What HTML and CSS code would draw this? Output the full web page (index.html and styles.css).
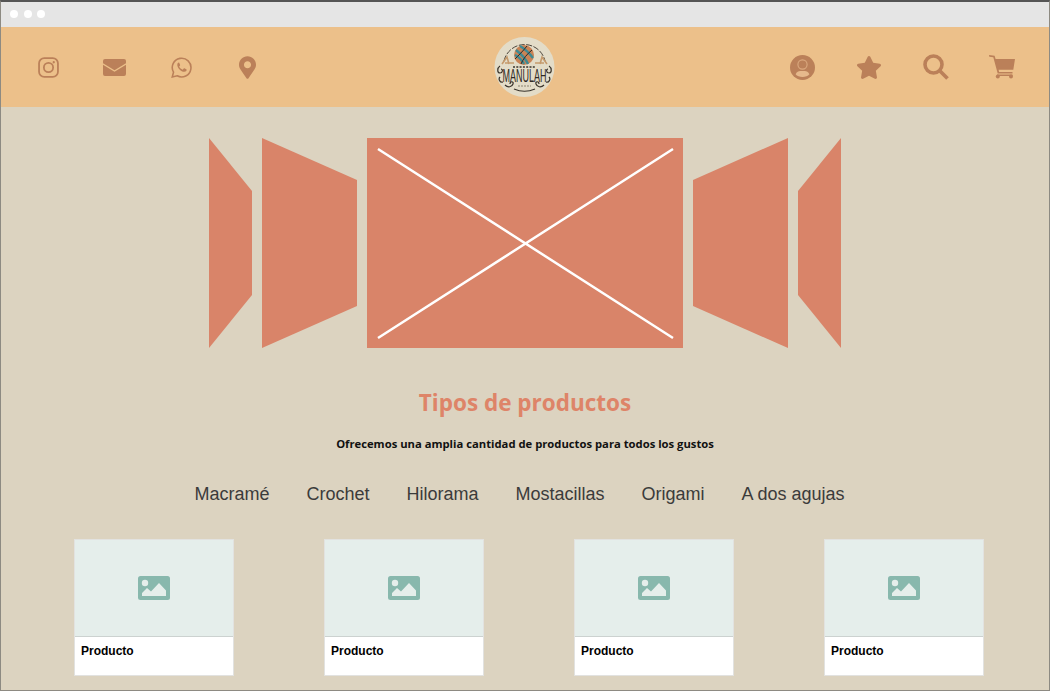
FILE: index.html
```html
<!DOCTYPE html>
<html>

<head>
    <meta charset="utf-8">
    <title>Manulah</title>
    <link rel="stylesheet" href="styles.css">
</head>

<body>
    <div class="chrome">
        <span class="dot"></span>
        <span class="dot"></span>
        <span class="dot"></span>
    </div>

    <header class="topbar">
        <nav class="icons icons-left">
            <a href="#" class="icon-cell">
                <svg class="ic" width="21" height="21" viewBox="0 0 20 20" fill="none" stroke="#bb8059" stroke-width="1.700">
                    <rect x="1" y="1" width="18" height="18" rx="5" />
                    <circle cx="10" cy="10" r="4.400" />
                    <circle cx="15" cy="5" r="1.100" fill="#bb8059" stroke="none" />
                </svg>
            </a>
            <a href="#" class="icon-cell">
                <svg class="ic" width="23" height="17" viewBox="0 0 23 17">
                    <path fill="#bb8059" d="M2 0h19a2 2 0 0 1 2 2v2.200l-11.500 7L0 4.200V2a2 2 0 0 1 2-2z" />
                    <path fill="#bb8059" d="M0 5.800l11.500 7L23 5.800V15a2 2 0 0 1-2 2H2a2 2 0 0 1-2-2z" />
                </svg>
            </a>
            <a href="#" class="icon-cell">
                <svg class="ic" width="21" height="21" viewBox="0 0 20 20">
                    <path fill="none" stroke="#bb8059" stroke-width="1.500" d="M1.200 19l1.200-4.500A8.900 8.900 0 1 1 5.900 17.900z" />
                    <path fill="#bb8059" d="M7.400 5.300c-.5 0-1.400.7-1.400 2.200 0 2.700 3.600 6.600 6.600 6.600 1.500 0 2.300-1 2.300-1.700 0-.5-.1-.7-.4-.8l-1.700-.8c-.3-.1-.5 0-.7.200l-.7.900c-.2.200-.4.200-.6.100-1.200-.5-2.300-1.500-2.900-2.700-.1-.2 0-.4.100-.5l.6-.8c.1-.2.100-.4 0-.6l-.7-1.600c-.2-.4-.3-.5-.6-.5z" />
                </svg>
            </a>
            <a href="#" class="icon-cell">
                <svg class="ic" width="17" height="23" viewBox="0 0 384 512">
                    <path fill="#bb8059" d="M172.268 501.67C26.97 291.031 0 262.429 0 192 0 85.961 85.961 0 192 0s192 85.961 192 192c0 70.429-26.97 99.031-172.268 309.67-9.535 13.774-29.93 13.773-39.464 0zM192 272c44.183 0 80-35.817 80-80s-35.817-80-80-80-80 35.817-80 80 35.817 80 80 80z" />
                </svg>
            </a>
        </nav>

        <div class="logo">
            <svg width="62" height="62" viewBox="0 0 62 62">
                <circle cx="30.500" cy="30" r="30" fill="#e3dcc8" />
                <path d="M10 24a21 21 0 0 1 41 0" fill="none" stroke="#3a342c" stroke-width=".9" stroke-dasharray="6 1.500" />
                <path d="M8 27l5-7 2 7M53 27l-5-7-2 7M11 26h9M41 26h9" fill="none" stroke="#c59a6c" stroke-width="1.600" />
                <circle cx="30" cy="18" r="10" fill="#c98355" />
                <path d="M22 13c5 4 10 9 12 14M21 18c4 2 7 5 9 9M26 9c5 3 10 8 13 12" fill="none" stroke="#3d8a93" stroke-width="2.400" />
                <path d="M33 9c-4 5-9 10-12 13M38 13c-5 4-9 9-11 14" fill="none" stroke="#2b2a28" stroke-width="1" />
                <path d="M19 30h23" stroke="#3a342c" stroke-width="1.600" stroke-dasharray="2 1.300" />
                <text class="logo-name" x="30.500" y="22.500" text-anchor="middle" textLength="44" lengthAdjust="spacingAndGlyphs" transform="scale(1 2)">MANULAH</text>
                <path d="M6 29c-3 2-3 7 0 7s3-4 1-4M55 29c3 2 3 7 0 7s-3-4-1-4M6 40c-2 2 0 6 3 5M55 40c2 2 0 6-3 5" fill="none" stroke="#3a342c" stroke-width="1.200" />
                <path d="M11 48c3 3 7 2 8-1s-3-3-3 0M50 48c-3 3-7 2-8-1s3-3 3 0M20 52c7 3 14 3 21 0" fill="none" stroke="#3a342c" stroke-width="1.200" />
                <path d="M24 49h13" stroke="#8c8371" stroke-width="1.200" stroke-dasharray="2 1" />
            </svg>
        </div>

        <nav class="icons icons-right">
            <a href="#" class="icon-cell">
                <svg class="ic" width="25" height="25" viewBox="0 0 25 25">
                    <circle cx="12.500" cy="12.500" r="12.500" fill="#bb8059" />
                    <circle cx="12.500" cy="9.500" r="4.600" fill="none" stroke="#dba97f" stroke-width="1.100" />
                    <path d="M5.600 19.300c1-2.200 3-3.300 4.600-3.300h4.600c1.600 0 3.600 1.100 4.600 3.300-1.500 1.700-4 2.700-6.900 2.700s-5.400-1-6.900-2.700z" fill="#e6b98c" />
                </svg>
            </a>
            <a href="#" class="icon-cell">
                <svg class="ic" width="26" height="23" viewBox="0 0 576 512">
                    <path fill="#bb8059" d="M259.300 17.800L194 150.200 47.900 171.500c-26.200 3.800-36.700 36.100-17.700 54.600l105.700 103-25 145.500c-4.500 26.300 23.200 46 46.400 33.700L288 439.600l130.700 68.700c23.200 12.200 50.900-7.400 46.400-33.700l-25-145.500 105.700-103c19-18.500 8.500-50.800-17.700-54.600L382 150.200 316.700 17.800c-11.700-23.600-45.600-23.900-57.400 0z" />
                </svg>
            </a>
            <a href="#" class="icon-cell">
                <svg class="ic" width="26" height="26" viewBox="0 0 26 26" fill="none" stroke="#bb8059">
                    <circle cx="10.500" cy="10.500" r="8.500" stroke-width="3.600" />
                    <path d="M16.500 16.500L24.500 24.500" stroke-width="3.800" />
                </svg>
            </a>
            <a href="#" class="icon-cell">
                <svg class="ic" width="26" height="24" viewBox="0 0 26 24">
                    <path fill="#bb8059" d="M0 0l5.600.8 1 3.200H26l-1.700 10.800H9.600l.5 2.200h13.400v1.500H8.700L4.300 2.200 .3 1.800z" />
                    <rect x="8" y="19.500" width="15.500" height="1.500" fill="#bb8059" />
                    <circle cx="8.800" cy="21.500" r="2" fill="#bb8059" />
                    <circle cx="22" cy="21.500" r="2" fill="#bb8059" />
                </svg>
            </a>
        </nav>
    </header>

    <main class="content">
        <section class="hero">
            <svg class="slide" width="43" height="210" viewBox="0 0 43 210">
                <polygon points="0,0 43,53 43,157 0,210" />
            </svg>
            <svg class="slide" width="95" height="210" viewBox="0 0 95 210">
                <polygon points="0,0 95,42 95,168 0,210" />
            </svg>
            <svg class="slide" width="316" height="210" viewBox="0 0 316 210">
                <rect width="316" height="210" />
                <path class="cross" d="M11 11L306 200M306 11L11 200" />
            </svg>
            <svg class="slide" width="95" height="210" viewBox="0 0 95 210">
                <polygon points="95,0 0,42 0,168 95,210" />
            </svg>
            <svg class="slide" width="43" height="210" viewBox="0 0 43 210">
                <polygon points="43,0 0,53 0,157 43,210" />
            </svg>
        </section>

        <h2 class="title">Tipos de productos</h2>
        <p class="subtitle">Ofrecemos una amplia cantidad de productos para todos los gustos</p>

        <ul class="cats">
            <li>Macramé</li>
            <li>Crochet</li>
            <li>Hilorama</li>
            <li>Mostacillas</li>
            <li>Origami</li>
            <li>A dos agujas</li>
        </ul>

        <div class="cards">
            <div class="card">
                <div class="thumb">
                    <svg width="32" height="24" viewBox="0 0 32 24">
                        <rect width="32" height="24" rx="2.500" fill="#88b8ad" />
                        <circle cx="7" cy="7" r="3.200" fill="#e5eeeb" />
                        <path d="M4 20v-3l5-5 4 3.500 8-8.500 7 7.500V20z" fill="#e5eeeb" />
                    </svg>
                </div>
                <div class="card-name">Producto</div>
            </div>
            <div class="card">
                <div class="thumb">
                    <svg width="32" height="24" viewBox="0 0 32 24">
                        <rect width="32" height="24" rx="2.500" fill="#88b8ad" />
                        <circle cx="7" cy="7" r="3.200" fill="#e5eeeb" />
                        <path d="M4 20v-3l5-5 4 3.500 8-8.500 7 7.500V20z" fill="#e5eeeb" />
                    </svg>
                </div>
                <div class="card-name">Producto</div>
            </div>
            <div class="card">
                <div class="thumb">
                    <svg width="32" height="24" viewBox="0 0 32 24">
                        <rect width="32" height="24" rx="2.500" fill="#88b8ad" />
                        <circle cx="7" cy="7" r="3.200" fill="#e5eeeb" />
                        <path d="M4 20v-3l5-5 4 3.500 8-8.500 7 7.500V20z" fill="#e5eeeb" />
                    </svg>
                </div>
                <div class="card-name">Producto</div>
            </div>
            <div class="card">
                <div class="thumb">
                    <svg width="32" height="24" viewBox="0 0 32 24">
                        <rect width="32" height="24" rx="2.500" fill="#88b8ad" />
                        <circle cx="7" cy="7" r="3.200" fill="#e5eeeb" />
                        <path d="M4 20v-3l5-5 4 3.500 8-8.500 7 7.500V20z" fill="#e5eeeb" />
                    </svg>
                </div>
                <div class="card-name">Producto</div>
            </div>
        </div>
    </main>
</body>

</html>
```

FILE: styles.css
```css
* {
    margin: 0;
    padding: 0;
    box-sizing: border-box;
}

html,
body {
    height: 691px;
    overflow: hidden;
}

body {
    background-color: #dcd3c0;
    border-top: 2px solid #555;
    border-left: 1px solid #8d8a82;
    border-right: 1px solid #8d8a82;
    border-bottom: 1px solid #8d8a82;
    font-family: "Liberation Sans", Arial, sans-serif;
}

.chrome {
    height: 25px;
    background-color: #e5e5e5;
    display: flex;
    align-items: center;
    gap: 5.500px;
    padding: 0 0 2px 9px;
}

.dot {
    width: 8px;
    height: 8px;
    border-radius: 50%;
    background-color: #fff;
}

.topbar {
    height: 80px;
    background-color: #ecc08a;
    display: flex;
    justify-content: space-between;
    align-items: center;
}

.icons {
    display: flex;
}

.icons-left {
    width: 280px;
    padding-left: 14px;
}

.icons-right {
    width: 280px;
    justify-content: flex-end;
    padding-right: 13.500px;
}

.icon-cell {
    width: 66.500px;
    height: 30px;
    display: flex;
    align-items: center;
    justify-content: center;
}

.logo {
    height: 62px;
    margin-top: 2px;
}

.logo-name {
    font-family: "Liberation Sans", sans-serif;
    font-size: 9.500px;
    fill: #2f2a24;
}

.content {
    padding-top: 31px;
}

.hero {
    display: flex;
    justify-content: center;
    gap: 10px;
}

.slide {
    fill: #d98469;
}

.cross {
    fill: none;
    stroke: #fff;
    stroke-width: 2.500;
}

.title {
    margin-top: 40px;
    text-align: center;
    font-family: "Open Sans", sans-serif;
    font-size: 22.500px;
    font-weight: 700;
    line-height: 30px;
    color: #de8468;
}

.subtitle {
    margin-top: 18px;
    text-align: center;
    font-family: "Open Sans", sans-serif;
    font-size: 11.250px;
    font-weight: 700;
    line-height: 16px;
    color: #111;
}

.cats {
    list-style: none;
    display: flex;
    justify-content: center;
    gap: 37px;
    margin-top: 31px;
    padding-right: 11px;
    font-size: 18px;
    line-height: 22px;
    color: #3b3b3b;
}

.cards {
    display: flex;
    justify-content: center;
    gap: 90px;
    margin-top: 34px;
    padding-left: 8px;
}

.card {
    width: 160px;
    height: 137px;
    background-color: #fff;
    border: 1px solid #e2e2e0;
}

.thumb {
    height: 97px;
    background-color: #e5eeeb;
    border-bottom: 1px solid #ccd2d0;
    display: flex;
    align-items: center;
    justify-content: center;
}

.card-name {
    padding: 7px 6px;
    font-size: 12px;
    font-weight: 700;
    line-height: 15px;
    color: #000;
}
```
